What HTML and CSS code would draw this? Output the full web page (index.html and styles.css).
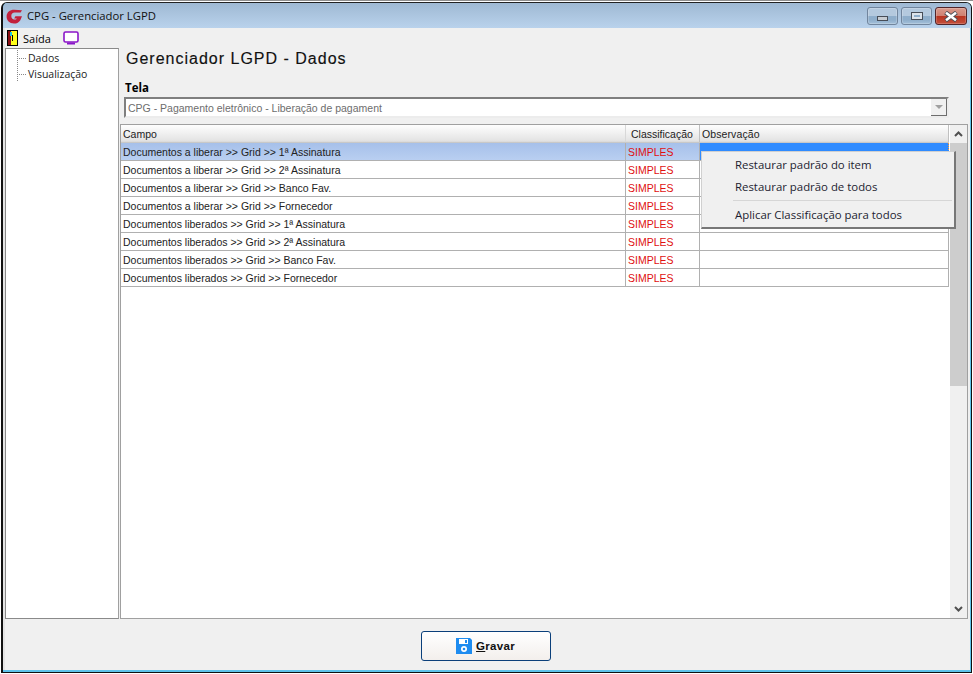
FILE: index.html
```html
<!DOCTYPE html>
<html lang="pt">
<head>
<meta charset="utf-8">
<title>CPG - Gerenciador LGPD</title>
<link rel="stylesheet" href="styles.css">
</head>
<body>
<div class="window">
  <header class="titlebar">
    <svg class="logo" viewBox="0 0 17 15" width="17" height="15"><path d="M16 1.2 14.6 3.6H8.6C6.6 3.6 5.3 5 5.3 7S6.6 10.6 8.4 10.6C9.6 10.6 10.4 10.2 10.8 9.4H8.2L9.4 7.2H16L14.3 11.2C13.2 13.2 10.8 14.6 8 14.6 3.4 14.6.6 11.6.6 7.6.6 3.4 3.8.8 8.2.8Z" fill="#c2203c"/></svg>
    <span class="title">CPG - Gerenciador LGPD</span>
    <div class="controls">
      <div class="ctl"><i class="glyph-min"></i></div>
      <div class="ctl"><i class="glyph-max"></i></div>
      <div class="ctl close"><svg viewBox="0 0 16 11" width="16" height="11"><path d="M2.5 1.5 13.5 9.5M13.5 1.5 2.5 9.5" stroke="#4a4f58" stroke-width="4.4"/><path d="M3 1.8 13 9.2M13 1.8 3 9.2" stroke="#fff" stroke-width="2.6"/></svg></div>
    </div>
  </header>
  <div class="client">
    <nav class="toolbar">
      <svg class="door" viewBox="0 0 11 16" width="11" height="16"><rect width="11" height="16" fill="#000"/><rect x="1" y="1" width="3" height="14" fill="#8b0f14"/><rect x="4" y="1" width="6" height="14" fill="#ffff1a"/><rect x="3" y="2" width="2" height="4" fill="#19c8e6"/><rect x="5" y="5" width="1" height="6" fill="#000"/></svg>
      <span class="tool-label">Saída</span>
      <svg class="screen" viewBox="0 0 16 14" width="16" height="14"><rect x="1" y="1" width="14" height="10" rx="1.5" fill="#fff" stroke="#8a16c8" stroke-width="1.6"/><rect x="4" y="11.5" width="8" height="2" fill="#8a16c8"/></svg>
    </nav>
    <div class="main">
      <aside class="tree">
        <div class="node">Dados</div>
        <div class="node">Visualização</div>
      </aside>
      <section class="content">
        <h1 class="heading">Gerenciador LGPD - Dados</h1>
        <div class="label">Tela</div>
        <div class="select">
          <span class="select-text">CPG - Pagamento eletrônico - Liberação de pagament</span>
          <div class="select-btn"><i></i></div>
        </div>
        <div class="gridbox">
          <div class="grid">
            <div class="row head"><div class="cell c1">Campo</div><div class="cell c2">Classificação</div><div class="cell c3">Observação</div></div>
            <div class="row sel"><div class="cell c1">Documentos a liberar &gt;&gt; Grid &gt;&gt; 1ª Assinatura</div><div class="cell c2">SIMPLES</div><div class="cell c3"></div></div>
            <div class="row"><div class="cell c1">Documentos a liberar &gt;&gt; Grid &gt;&gt; 2ª Assinatura</div><div class="cell c2">SIMPLES</div><div class="cell c3"></div></div>
            <div class="row"><div class="cell c1">Documentos a liberar &gt;&gt; Grid &gt;&gt; Banco Fav.</div><div class="cell c2">SIMPLES</div><div class="cell c3"></div></div>
            <div class="row"><div class="cell c1">Documentos a liberar &gt;&gt; Grid &gt;&gt; Fornecedor</div><div class="cell c2">SIMPLES</div><div class="cell c3"></div></div>
            <div class="row"><div class="cell c1">Documentos liberados &gt;&gt; Grid &gt;&gt; 1ª Assinatura</div><div class="cell c2">SIMPLES</div><div class="cell c3"></div></div>
            <div class="row"><div class="cell c1">Documentos liberados &gt;&gt; Grid &gt;&gt; 2ª Assinatura</div><div class="cell c2">SIMPLES</div><div class="cell c3"></div></div>
            <div class="row"><div class="cell c1">Documentos liberados &gt;&gt; Grid &gt;&gt; Banco Fav.</div><div class="cell c2">SIMPLES</div><div class="cell c3"></div></div>
            <div class="row"><div class="cell c1">Documentos liberados &gt;&gt; Grid &gt;&gt; Fornecedor</div><div class="cell c2">SIMPLES</div><div class="cell c3"></div></div>
          </div>
          <div class="scrollbar">
            <svg class="arrow" viewBox="0 0 9 6" width="9" height="6"><path d="M1 5 4.5 1.5 8 5" fill="none" stroke="#505050" stroke-width="2"/></svg>
            <div class="thumb"></div>
            <div class="track"></div>
            <svg class="arrow" viewBox="0 0 9 6" width="9" height="6"><path d="M1 1 4.5 4.5 8 1" fill="none" stroke="#505050" stroke-width="2"/></svg>
          </div>
          <div class="menu">
            <div class="menu-item">Restaurar padrão do item</div>
            <div class="menu-item">Restaurar padrão de todos</div>
            <div class="menu-sep"></div>
            <div class="menu-item">Aplicar Classificação para todos</div>
          </div>
        </div>
      </section>
    </div>
    <footer class="footer">
      <button class="save">
        <svg viewBox="0 0 16 16" width="16" height="16"><path d="M0 0H14L16 2V16H0Z" fill="#1e8cf0"/><rect x="3" y="1" width="9" height="5" fill="#fff"/><rect x="9" y="2" width="2" height="3" fill="#1e8cf0"/><circle cx="8" cy="11" r="3" fill="#fff"/><circle cx="8" cy="11" r="1.3" fill="#1e8cf0"/></svg>
        <span class="save-text"><u>G</u>ravar</span>
      </button>
    </footer>
  </div>
</div>
</body>
</html>
```
FILE: styles.css
```css
html, body {
  margin: 0;
  height: 100%;
  background: #fff;
  overflow: hidden;
}
body {
  width: 973px;
  height: 674px;
  border-top: 1px solid #8f8f8f;
  box-sizing: border-box;
  padding-top: 1px;
  font-family: "Liberation Sans", sans-serif;
  font-size: 11px;
  color: #000;
}
.window {
  width: 971px;
  height: 671px;
  margin-left: 1px;
  box-sizing: border-box;
  border: 1px solid #111;
  border-left-width: 2px;
  border-top-color: #222;
  border-radius: 6px 6px 0 0;
  background: #5fc2ea;
  display: flex;
  flex-direction: column;
  overflow: hidden;
}
.titlebar {
  height: 25px;
  flex: none;
  display: flex;
  align-items: center;
  padding: 0 3px 0 3px;
  background: linear-gradient(#9fb9d3, #b9d2ec);
}
.logo { flex: none; margin-top: 1px; }
.title {
  margin-left: 4px;
  font-family: "Open Sans", sans-serif;
  font-size: 11.3px;
  color: #111;
}
.controls {
  margin-left: auto;
  display: flex;
  gap: 3px;
  padding-right: 1px;
  align-self: flex-start;
  padding-top: 4px;
}
.ctl {
  width: 31px;
  height: 18px;
  box-sizing: border-box;
  border: 1px solid #71859d;
  border-radius: 3px;
  background: linear-gradient(#b4c9de 0 50%, #8faecb 50% 75%, #a5c0da 100%);
  box-shadow: inset 0 0 0 1px rgba(255,255,255,.2);
  display: flex;
  align-items: center;
  justify-content: center;
}
.glyph-min {
  width: 9px;
  height: 3px;
  margin-top: 4px;
  background: #c7ccd2;
  border: 1px solid #474d57;
}
.glyph-max {
  width: 6px;
  height: 2px;
  background: #8faecb;
  border: 2px solid #dde3ea;
  outline: 1px solid #474d57;
}
.close {
  width: 32px;
  border-color: #51252a;
  background: linear-gradient(#d99a8c 0, #cf7f70 50%, #b8321f 50%, #c4503c 100%);
}
.client {
  margin: 0 1px 2px 0;
  border-left: 2px solid #e4e4e4;
  flex: 1;
  min-height: 0;
  background: #f0f0f0;
  display: flex;
  flex-direction: column;
}
.toolbar {
  height: 20px;
  flex: none;
  display: flex;
  align-items: center;
  padding-left: 2px;
}
.door { flex: none; }
.tool-label {
  margin-left: 5px;
  font-family: "Open Sans", sans-serif;
  font-size: 11px;
}
.screen { margin-left: 12px; }
.main {
  height: 571px;
  flex: none;
  display: flex;
}
.tree {
  width: 114px;
  flex: none;
  box-sizing: border-box;
  margin-right: 1px;
  background: #fff;
  border: 1px solid #8a8a8a;
  border-right-color: #a0a0a0;
  padding-top: 1px;
}
.node {
  height: 16px;
  line-height: 16px;
  padding-left: 22px;
  font-family: "Open Sans", sans-serif;
  font-size: 10.5px;
  color: #1c1c1c;
  background:
    repeating-linear-gradient(90deg, #888 0 1px, transparent 1px 2px) 11px 8px / 9px 1px no-repeat,
    repeating-linear-gradient(#888 0 1px, transparent 1px 2px) 11px 0 / 1px 16px no-repeat;
}
.content {
  flex: 1;
  min-width: 0;
  display: flex;
  flex-direction: column;
}
.heading {
  margin: 0;
  height: 30px;
  padding: 0 0 0 6px;
  line-height: 22px;
  font-family: "Liberation Sans", sans-serif;
  font-size: 16px;
  font-weight: 400;
  letter-spacing: 1px;
  color: #111;
  -webkit-text-stroke: .15px #111;
}
.label {
  height: 16px;
  padding-left: 5px;
  margin-top: 3px;
  line-height: 14px;
  font-family: "Open Sans", sans-serif;
  font-size: 11.5px;
  font-weight: 700;
}
.select {
  margin-left: 4px;
  width: 825px;
  height: 21px;
  flex: none;
  box-sizing: border-box;
  border: 2px solid #7f7f7f;
  border-right-color: #ececec;
  border-bottom-color: #ececec;
  background: #fff;
  display: flex;
  align-items: center;
  padding-left: 2px;
}
.select-text {
  color: #6d6d6d;
  font-size: 10.5px;
}
.select-btn {
  margin-left: auto;
  width: 16px;
  height: 17px;
  box-sizing: border-box;
  background: #f0f0f0;
  border-right: 1px solid #6d6d6d;
  border-bottom: 1px solid #6d6d6d;
  display: flex;
  align-items: center;
  justify-content: center;
}
.select-btn i {
  width: 0;
  height: 0;
  border-left: 4px solid transparent;
  border-right: 4px solid transparent;
  border-top: 4px solid #a0a0a0;
}
.gridbox {
  position: relative;
  margin-top: 6px;
  flex: 1;
  min-height: 0;
  width: 848px;
  box-sizing: border-box;
  border: 1px solid #a0a0a0;
  background: #fff;
  display: flex;
}
.grid {
  flex: 1;
  min-width: 0;
  margin-left: 0;
}
.row {
  display: flex;
  height: 18px;
  box-sizing: border-box;
  width: 828px;
  border-bottom: 1px solid #b0b0b0;
}
.cell {
  box-sizing: border-box;
  padding-left: 2px;
  line-height: 19px;
  font-size: 10.5px;
  color: #222;
  white-space: nowrap;
  overflow: hidden;
  border-right: 1px solid #b0b0b0;
}
.c1 { width: 505px; }
.c2 { width: 74px; padding-left: 2px; color: #e01010; }
.c3 { width: 249px; padding-left: 2px; letter-spacing: .1px; }
.head {
  background: linear-gradient(#fefefe, #e4e4e4 90%, #d8d8d8);
  border-bottom-color: #c8c8c8;
}
.head .cell { color: #222; border-right-color: #c0c0c0; }
.head .c1 { border-right-color: #d8d8d8; }
.head .c2 { padding-left: 5px; }
.sel { background: linear-gradient(#a6c0ea, #b9cff1); border-bottom-color: #b0b0b0; }
.sel .c3 { background: #2f8bff; border-right: 1px dotted #ff9a30; }
.scrollbar {
  width: 17px;
  flex: none;
  margin-left: 1px;
  background: #f0f0f0;
  display: flex;
  flex-direction: column;
  align-items: center;
}
.arrow { flex: none; margin: 6px 0 6px; }
.thumb {
  width: 100%;
  height: 243px;
  flex: none;
  background: #cdcdcd;
}
.track { flex: 1; }
.menu {
  position: absolute;
  left: 580px;
  top: 26px;
  width: 255px;
  height: 78px;
  box-sizing: border-box;
  background: #f0f0f0;
  border: 1px solid #d0d0d0;
  border-right: 2px solid #777;
  border-bottom: 2px solid #777;
  padding: 2px 2px 0 33px;
  font-family: "Open Sans", sans-serif;
  font-size: 11.4px;
  color: #1d1d30;
}
.menu-item { height: 22px; line-height: 22px; }
.menu-sep {
  height: 1px;
  background: #d6d6d6;
  margin: 2px 0 2px -2px;
}
.menu-sep + .menu-item { height: 24px; line-height: 24px; }
.footer {
  flex: 1;
  display: flex;
  justify-content: center;
  align-items: flex-start;
  padding-top: 12px;
}
.save {
  width: 130px;
  height: 30px;
  padding: 0;
  box-sizing: border-box;
  border: 1px solid #0a3f7a;
  border-radius: 3px;
  background: linear-gradient(#ffffff, #f3efec);
  display: flex;
  align-items: center;
  justify-content: center;
  gap: 4px;
  margin-right: 4px;
}
.save-text {
  font-family: "Liberation Sans", sans-serif;
  font-size: 11.5px;
  font-weight: 700;
  letter-spacing: .3px;
  color: #111;
}
```
